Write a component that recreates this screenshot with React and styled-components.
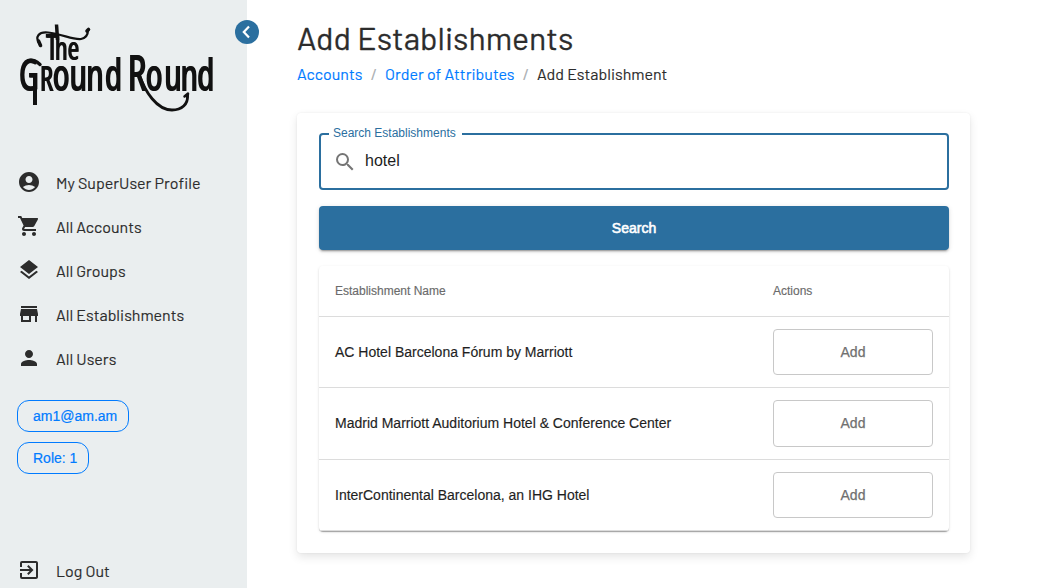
import React from "react";
import styled, { createGlobalStyle } from "styled-components";
import {
  MdAccountCircle,
  MdShoppingCart,
  MdLayers,
  MdStore,
  MdPerson,
  MdExitToApp,
  MdSearch,
} from "react-icons/md";

const GlobalStyle = createGlobalStyle`
  *, *::before, *::after { box-sizing: border-box; }
  body {
    margin: 0;
    background: #fff;
    color: #2c2c2c;
    font-family: "Liberation Sans", Arial, sans-serif;
    overflow: hidden;
  }
`;

const brandFont = `Barlow, Roboto, sans-serif`;

const Page = styled.div`
  display: flex;
  height: 588px;
`;

const Sidebar = styled.aside`
  position: relative;
  display: flex;
  flex-direction: column;
  flex: none;
  width: 247px;
  background: #eaeeef;
`;

const Collapse = styled.button`
  position: absolute;
  top: 20px;
  right: -12px;
  width: 24px;
  height: 24px;
  padding: 0;
  border: 0;
  border-radius: 50%;
  background: #2b6f9f;
  color: #fff;
  svg { display: block; width: 24px; height: 24px; }
`;

const Logo = styled.svg`
  display: block;
  flex: none;
  width: 247px;
  height: 161px;
`;

const Lettering = styled.g`
  fill: #111;
  font-family: "Open Sans", sans-serif;
  font-weight: 600;
  filter: drop-shadow(1px 0 0 #111);
`;

const Nav = styled.nav`
  display: flex;
  flex-direction: column;
`;

const NavItem = styled.a`
  display: flex;
  align-items: center;
  gap: 15px;
  height: 44px;
  padding-left: 17px;
  color: #2c2c2c;
  svg { width: 24px; height: 24px; margin-bottom: 2px; }
`;

const NavLabel = styled.span`
  font: 400 16px/24px ${brandFont};
  -webkit-text-stroke: 0.15px currentColor;
  white-space: nowrap;
`;

const Chips = styled.div`
  display: flex;
  flex-direction: column;
  align-items: flex-start;
  gap: 10px;
  padding: 19px 17px 0;
`;

const Chip = styled.span`
  height: 32px;
  width: ${(p) => p.$width}px;
  padding-left: 15px;
  border: 1px solid #007bff;
  border-radius: 12px;
  color: #007bff;
  font-size: 14px;
  line-height: 30px;
  -webkit-text-stroke: 0.2px currentColor;
  white-space: nowrap;
`;

const Footer = styled.div`
  margin-top: auto;
  height: 39px;
`;

const Main = styled.main`
  display: flex;
  flex-direction: column;
  align-items: flex-start;
  padding: 17px 0 0 50px;
`;

const Title = styled.h1`
  margin: 0;
  font: 400 32px/40px ${brandFont};
  -webkit-text-stroke: 0.3px currentColor;
  white-space: nowrap;
`;

const Crumbs = styled.nav`
  display: flex;
  margin-top: 5px;
  font: 400 16px/24px ${brandFont};
  -webkit-text-stroke: 0.15px currentColor;
  white-space: nowrap;
`;

const Crumb = styled.span`
  width: ${(p) => p.$width}px;
  color: ${(p) => (p.$link ? "#007bff" : "#2c2c2c")};
`;

const Slash = styled.span`
  width: 22px;
  text-align: center;
  color: #a9adb0;
`;

const Card = styled.section`
  display: flex;
  flex-direction: column;
  gap: 16px;
  width: 673px;
  height: 440px;
  margin-top: 27px;
  padding: 20px 21px 20px 22px;
  border-radius: 4px;
  box-shadow: 0 4px 10px rgba(0, 0, 0, 0.1), 0 0 2px rgba(0, 0, 0, 0.08);
`;

const Field = styled.fieldset`
  display: flex;
  align-items: center;
  height: 63px;
  margin: -6px 0 0;
  padding: 0 14px;
  border: 2px solid #2b6f9f;
  border-radius: 4px;
  min-width: 0;
`;

const Legend = styled.legend`
  margin-left: -6px;
  padding: 0 6px 0 4px;
  height: 14px;
  color: #2b6f9f;
  font-size: 12px;
  line-height: 12px;
`;

const Query = styled.div`
  display: flex;
  align-items: center;
  gap: 8px;
  height: 41px;
  font-size: 16px;
  line-height: 24px;
  color: #1c1c1c;
  span { margin-bottom: 2px; }
  svg { width: 24px; height: 24px; color: #757575; margin-left: -2px; }
`;

const SearchButton = styled.button`
  flex: none;
  height: 44px;
  border: 0;
  padding: 0;
  border-radius: 4px;
  background: #2b6f9f;
  color: #fff;
  font: 400 14px "Liberation Sans", Arial, sans-serif;
  -webkit-text-stroke: 0.6px #fff;
  box-shadow: 0 3px 1px -2px rgba(0, 0, 0, 0.2), 0 2px 2px rgba(0, 0, 0, 0.14), 0 1px 5px rgba(0, 0, 0, 0.12);
`;

const Table = styled.div`
  display: flex;
  flex-direction: column;
  border-radius: 4px;
  box-shadow: 0 2px 1px -1px rgba(0, 0, 0, 0.2), 0 1px 1px rgba(0, 0, 0, 0.14), 0 1px 3px rgba(0, 0, 0, 0.12);
`;

const Row = styled.div`
  display: grid;
  grid-template-columns: 438px 160px;
  align-items: center;
  height: ${(p) => p.$height}px;
  padding: 0 16px;
  border-bottom: 1px solid #dcdcdc;
  color: ${(p) => (p.$head ? "#6b6b6b" : "#1f1f1f")};
  font-size: ${(p) => (p.$head ? 12 : 14)}px;
`;

const Name = styled.span`
  padding-bottom: ${(p) => p.$lift || 0}px;
  -webkit-text-stroke: 0.15px currentColor;
  white-space: nowrap;
`;

const AddButton = styled.button`
  width: 160px;
  height: ${(p) => p.$height}px;
  padding: 0 0 ${(p) => p.$height - 46}px;
  border: 1px solid #c8c8c8;
  border-radius: 4px;
  background: #fff;
  color: #707070;
  font: 400 14px "Liberation Sans", Arial, sans-serif;
  -webkit-text-stroke: 0.25px #707070;
`;

const items = [
  { icon: MdAccountCircle, label: "My SuperUser Profile" },
  { icon: MdShoppingCart, label: "All Accounts" },
  { icon: MdLayers, label: "All Groups" },
  { icon: MdStore, label: "All Establishments" },
  { icon: MdPerson, label: "All Users" },
];

const rows = [
  { name: "AC Hotel Barcelona Fórum by Marriott", height: 71, button: 46, lift: 0 },
  { name: "Madrid Marriott Auditorium Hotel & Conference Center", height: 72, button: 47, lift: 2 },
  { name: "InterContinental Barcelona, an IHG Hotel", height: 71, button: 46, lift: 0 },
];

function BrandLogo() {
  return (
    <Logo viewBox="0 0 247 161" role="img" aria-label="The Ground Round">
      <Lettering>
        <text transform="scale(.6 1)" y="60" x="76 91 112" fontSize="33">
          <tspan fontSize="36">T</tspan>he
        </text>
        <text transform="scale(.6 1)" y="91" x="31 66 87 115 143 174" fontSize="46">
          G<tspan fontSize="35">R</tspan>ound
        </text>
        <text transform="scale(.6 1)" y="91" x="212 242 273 300 328" fontSize="46">
          <tspan fontSize="50">R</tspan>ound
        </text>
      </Lettering>
      <g fill="none" stroke="#111" strokeLinecap="round" strokeLinejoin="round">
        <path d="M40 44C34 37 39 31.500 48 32.500C62 34 73 40 81 39C86 38 88 34 88 30" strokeWidth="2.200" />
        <path d="M38.500 41L40.500 45.500M87 31L88.500 29.500" strokeWidth="3.600" />
        <path d="M56.500 24.500L57.500 40" strokeWidth="3.500" strokeLinecap="butt" />
        <path d="M139 74C145 92 157 110 172 110C182 110 188 104 187.500 96" strokeWidth="2.800" />
        <path d="M184.500 96.500L188 93.500L187.500 97" strokeWidth="2.500" />
        <path d="M35 77L35 105" strokeWidth="4" strokeLinecap="butt" />
        <path d="M37 62L40 64.500" strokeWidth="3.500" />
      </g>
    </Logo>
  );
}

export default function App() {
  return (
    <Page>
      <GlobalStyle />
      <Sidebar>
        <Collapse aria-label="Collapse sidebar">
          <svg viewBox="0 0 24 24" fill="none" stroke="currentColor" strokeWidth="2.200">
            <path d="M14 6.500L8.800 12L14 17.500" />
          </svg>
        </Collapse>
        <BrandLogo />
        <Nav>
          {items.map(({ icon: Icon, label }) => (
            <NavItem key={label}><Icon /><NavLabel>{label}</NavLabel></NavItem>
          ))}
        </Nav>
        <Chips>
          <Chip $width={112}>am1@am.am</Chip>
          <Chip $width={72}>Role: 1</Chip>
        </Chips>
        <Footer>
          <NavItem><MdExitToApp /><NavLabel>Log Out</NavLabel></NavItem>
        </Footer>
      </Sidebar>
      <Main>
        <Title>Add Establishments</Title>
        <Crumbs>
          <Crumb $link $width={66}>Accounts</Crumb>
          <Slash>/</Slash>
          <Crumb $link $width={130}>Order of Attributes</Crumb>
          <Slash>/</Slash>
          <Crumb $width={131}>Add Establishment</Crumb>
        </Crumbs>
        <Card>
          <Field>
            <Legend>Search Establishments</Legend>
            <Query><MdSearch /><span>hotel</span></Query>
          </Field>
          <SearchButton>Search</SearchButton>
          <Table>
            <Row $head $height={51}><Name>Establishment Name</Name><Name>Actions</Name></Row>
            {rows.map((r) => (
              <Row key={r.name} $height={r.height}>
                <Name $lift={r.lift}>{r.name}</Name>
                <AddButton $height={r.button}>Add</AddButton>
              </Row>
            ))}
          </Table>
        </Card>
      </Main>
    </Page>
  );
}
